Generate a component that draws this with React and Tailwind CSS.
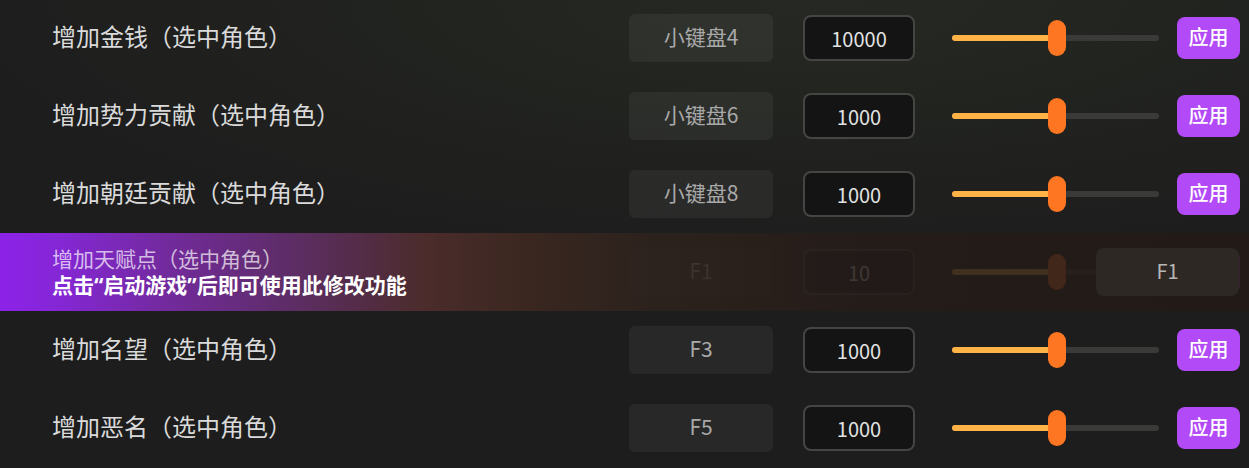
import React from "react";

const rows = [
  { label: "增加金钱（选中角色）", key: "小键盘4", value: "10000" },
  { label: "增加势力贡献（选中角色）", key: "小键盘6", value: "1000" },
  { label: "增加朝廷贡献（选中角色）", key: "小键盘8", value: "1000" },
  { label: "增加天赋点（选中角色）", key: "F1", value: "10", locked: true },
  { label: "增加名望（选中角色）", key: "F3", value: "1000" },
  { label: "增加恶名（选中角色）", key: "F5", value: "1000" },
];

function Slider({ frac }) {
  return (
    <div className="relative ml-[37px] w-[207px] h-[36px] flex items-center">
      <div className="w-full h-[6px] rounded-full bg-[#3a3b38] overflow-hidden">
        <div className="h-full bg-[#ffb347]" style={{ width: `${frac * 100}%` }} />
      </div>
      <div
        className="absolute top-0 h-[36px] w-[18px] rounded-full bg-[#fe7622]"
        style={{ left: `calc(${frac * 100}% - 9px)` }}
      />
    </div>
  );
}

function Controls({ row }) {
  return (
    <div className="flex items-center">
      <div className="w-[144px] h-[48px] rounded-[6px] bg-white/5 flex items-center justify-center text-[21px] text-[#a9a9a9] pb-[3px]">
        {row.key}
      </div>
      <div className="ml-[30px] w-[112px] h-[46px] rounded-[8px] border-2 border-[#454544] bg-[#141414] flex items-center justify-center text-[20px] text-[#e2e2e2] pt-[2px]">
        {row.value}
      </div>
      <Slider frac={0.505} />
      <button className="ml-[18px] w-[63px] h-[42px] rounded-[8px] bg-[#b34af8] text-white text-[20px] font-medium flex items-center justify-center pb-[3px]">
        应用
      </button>
    </div>
  );
}

function Row({ row }) {
  if (row.locked) {
    return (
      <div className="relative h-[78px] flex items-center pr-[9px] bg-[linear-gradient(to_right,#8d22e8_0%,#8427d4_5%,#732a9f_13%,#5c2d62_24%,#4b2c2b_34%,#3a2720_42%,#2c221d_52%,#241c19_70%,#221a17_100%)]">
        <div className="flex-1 pl-[52px] flex flex-col pb-[3px]">
          <span className="h-[26px] leading-[26px] text-[21px] text-white/70">{row.label}</span>
          <span className="h-[26px] leading-[26px] text-[21px] font-bold text-white">
            点击<span style={{ fontFamily: '"Noto Sans", sans-serif' }}>“</span>启动游戏<span style={{ fontFamily: '"Noto Sans", sans-serif' }}>”</span>后即可使用此修改功能
          </span>
        </div>
        <div className="opacity-[0.13]">
          <Controls row={row} />
        </div>
        <div className="absolute right-[10px] top-[15px] w-[143px] h-[48px] rounded-[8px] bg-[#2e2825] flex items-center justify-center text-[20px] text-[#b6b6b6] pb-[3px]">
          F1
        </div>
      </div>
    );
  }
  return (
    <div className="h-[78px] flex items-center pr-[9px]">
      <div className="flex-1 pl-[52px] text-[24px] text-[#dadada] pb-[4px]">{row.label}</div>
      <Controls row={row} />
    </div>
  );
}

export default function App() {
  return (
    <div
      className="w-[1249px] h-[468px] overflow-hidden bg-[#1d1d1d] bg-[radial-gradient(ellipse_70%_55%_at_65%_0%,#262923_0%,#222420_40%,#1d1d1d_100%)]"
      style={{ fontFamily: '"Noto Sans CJK SC", "Noto Sans", sans-serif' }}
    >
      <div className="mt-[-1px] flex flex-col">
        {rows.map((r, i) => (
          <Row key={i} row={r} />
        ))}
      </div>
    </div>
  );
}
